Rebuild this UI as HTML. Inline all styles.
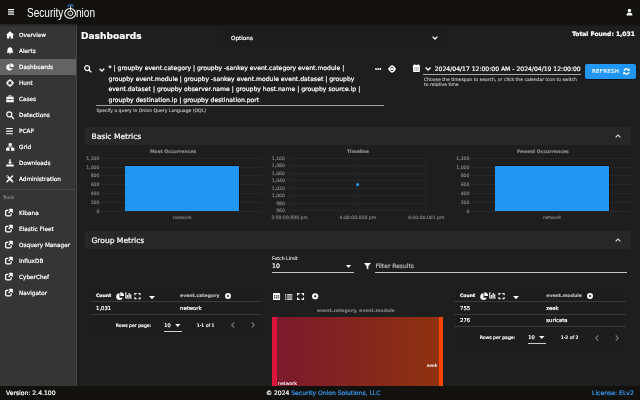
<!DOCTYPE html>
<html lang="en">
<head>
<meta charset="utf-8">
<title>Security Onion - Dashboards</title>
<style>
*{box-sizing:border-box;margin:0;padding:0}
html,body{width:640px;height:400px;overflow:hidden;background:#1e1e1e}
body{will-change:transform;font-family:"DejaVu Sans","Liberation Sans",sans-serif;color:#fff;position:relative;font-size:6px}
.a{position:absolute}
.t{position:absolute;white-space:nowrap;line-height:1;-webkit-text-stroke:0.2px}
.b{font-weight:bold}
svg{position:absolute;overflow:visible}
</style>
</head>
<body>
<div class="a" style="left:0px;top:0px;width:640px;height:24px;background:#12110d;"></div>
<div class="a" style="left:0px;top:24px;width:76.5px;height:362px;background:#353535;border-right:0.7px solid #424242;"></div>
<div class="a" style="left:0px;top:386px;width:640px;height:14px;background:#12110d;"></div>
<div class="a" style="left:0;top:24px;width:640px;height:3px;background:linear-gradient(rgba(0,0,0,.4),rgba(0,0,0,0))"></div>
<svg style="left:7.5px;top:9.3px;" width="6" height="6" viewBox="0 0 6 6"><path d="M0 .7h6M0 2.900h6M0 5.100h6" stroke="#fff" stroke-width="1.300" fill="none"/></svg>
<div class="t" style="top:8.00px;font-size:11.90px;left:27.20px;font-family:'Liberation Sans','DejaVu Sans',sans-serif;transform-origin:0 0;transform:scaleX(0.845);-webkit-text-stroke:0;">Security</div>
<svg style="left:56px;top:0px;" width="32" height="24" viewBox="0 0 32 24"><path d="M11.700 7.100a3 3 0 0 1 5.800 -.5" stroke="#1e78d2" stroke-width="1.200" fill="none"/><ellipse cx="14.100" cy="13.400" rx="5.400" ry="4.800" stroke="#fff" stroke-width="1.050" fill="none"/><path d="M14.800 5.800c-.4 1.500-.4 3.200 .1 4.900" stroke="#fff" stroke-width=".9" fill="none"/><ellipse cx="14.300" cy="13.300" rx="2.500" ry="2.250" stroke="#fff" stroke-width=".95" fill="none"/><circle cx="14.300" cy="13.300" r=".55" fill="#ddd"/></svg>
<div class="t" style="top:8.00px;font-size:11.90px;left:76.30px;font-family:'Liberation Sans','DejaVu Sans',sans-serif;transform-origin:0 0;transform:scaleX(0.845);-webkit-text-stroke:0;">nion</div>
<svg style="left:625.8px;top:8.1px;" width="6.9" height="8" viewBox="0 0 8 8"><circle cx="4" cy="2.2" r="2" fill="#fff"/><path d="M.6 8c0-2.4 1.2-3.4 3.4-3.4s3.4 1 3.4 3.4z" fill="#fff"/></svg>
<div class="a" style="left:0px;top:59px;width:76px;height:16px;background:#636363;"></div>
<div class="t" style="top:33.00px;font-size:5.74px;left:19.00px;">Overview</div>
<svg style="left:5.9px;top:31.3px;" width="8" height="8" viewBox="0 0 8 8"><path d="M4 .3L-.1 3.9h1.100v3.700h2.300V5.300h1.400v2.300h2.300V3.900h1.100z" fill="#fff"/></svg>
<div class="t" style="top:49.00px;font-size:5.74px;left:19.00px;">Alerts</div>
<svg style="left:5.9px;top:47.3px;" width="8" height="8" viewBox="0 0 8 8"><path d="M4 .3c-1.600 0-2.500 1.200-2.500 2.800c0 1.500-.5 2.200-1 2.700h7c-.5-.5-1-1.200-1-2.700c0-1.600-.9-2.800-2.500-2.800zM3.100 6.400a.9 .9 0 0 0 1.800 0z" fill="#fff"/></svg>
<div class="t" style="top:65.00px;font-size:5.74px;left:19.00px;">Dashboards</div>
<svg style="left:5.9px;top:63.3px;" width="8" height="8" viewBox="0 0 8 8"><path d="M3.600 .9a3.300 3.300 0 1 0 3.000 4.600h-3.000zM4.400 .2v3.700h3.500a3.500 3.500 0 0 0 -3.500-3.700z" fill="#fff"/></svg>
<div class="t" style="top:81.00px;font-size:5.74px;left:19.00px;">Hunt</div>
<svg style="left:5.9px;top:79.3px;" width="8" height="8" viewBox="0 0 8 8"><circle cx="4" cy="4" r="2.700" stroke="#fff" stroke-width="1.200" fill="none"/><path d="M4 0v3M4 5v3M0 4h3M5 4h3" stroke="#fff" stroke-width="1"/></svg>
<div class="t" style="top:97.00px;font-size:5.74px;left:19.00px;">Cases</div>
<svg style="left:5.9px;top:95.3px;" width="8" height="8" viewBox="0 0 8 8"><path d="M2.700 1.600v-.8h2.600v.8" stroke="#fff" stroke-width=".9" fill="none"/><path d="M.3 1.800h7.400v2.200h-7.400zM.3 4.600h3v.7h1.400v-.7h3v2.700h-7.400z" fill="#fff"/></svg>
<div class="t" style="top:113.00px;font-size:5.74px;left:19.00px;">Detections</div>
<svg style="left:5.9px;top:111.3px;" width="8" height="8" viewBox="0 0 8 8"><circle cx="3.300" cy="3.300" r="2.500" stroke="#fff" stroke-width="1.200" fill="none"/><path d="M5.200 5.200l2.300 2.300" stroke="#fff" stroke-width="1.300" stroke-linecap="round"/></svg>
<div class="t" style="top:129.00px;font-size:5.74px;left:19.00px;">PCAP</div>
<svg style="left:5.9px;top:127.3px;" width="8" height="8" viewBox="0 0 8 8"><path d="M.2 1.500h6.600M.2 4.100h6.600M.2 6.700h6.600" stroke="#fff" stroke-width="1.150"/></svg>
<div class="t" style="top:145.00px;font-size:5.74px;left:19.00px;">Grid</div>
<svg style="left:5.9px;top:143.3px;" width="8" height="8" viewBox="0 0 8 8"><path d="M2.600 .2h3.200v2.600h-3.200zM.1 5.100h3.400v2.600h-3.400zM5 5.100h3.400v2.600h-3.400z" fill="#fff"/><path d="M4.200 2.600v1.500M1.800 5.200v-1.200h4.900v1.200" stroke="#fff" stroke-width=".8" fill="none"/></svg>
<div class="t" style="top:161.00px;font-size:5.74px;left:19.00px;">Downloads</div>
<svg style="left:5.9px;top:159.3px;" width="8" height="8" viewBox="0 0 8 8"><path d="M3.300 .3h1.400v2.600h1.500l-2.200 2.300l-2.200-2.300h1.500zM.3 5.500h7.400v2h-7.400z" fill="#fff"/></svg>
<div class="t" style="top:177.00px;font-size:5.74px;left:19.00px;">Administration</div>
<svg style="left:5.9px;top:175.3px;" width="8" height="8" viewBox="0 0 8 8"><path d="M1.200 1.200l5.400 5.400" stroke="#fff" stroke-width="1.900" stroke-linecap="round"/><path d="M6.600 1l-5.600 5.800" stroke="#fff" stroke-width="1.500" stroke-linecap="round"/><circle cx="1.300" cy="1.300" r=".7" fill="#363636"/><circle cx="6.700" cy="6.500" r=".45" fill="#363636"/></svg>
<div class="a" style="left:0px;top:189px;width:75px;height:1px;background:#4a4a4a;"></div>
<div class="t" style="top:196.00px;font-size:4.47px;left:3.00px;color:#b0b0b0;-webkit-text-stroke:0;">Tools</div>
<div class="t" style="top:211.00px;font-size:5.74px;left:19.00px;">Kibana</div>
<svg style="left:5.2px;top:209px;" width="7.5" height="7.6" viewBox="0 0 8 8"><path d="M3.600 1.500h-1.800a1.100 1.100 0 0 0 -1.100 1.100v3.600a1.100 1.100 0 0 0 1.100 1.100h3.600a1.100 1.100 0 0 0 1.100-1.100v-1.700" stroke="#fff" stroke-width="1.350" fill="none"/><path d="M4.700 .3h3v3zM7.100 .9l-3.300 3.300" stroke="#fff" stroke-width="1.200" fill="#fff" stroke-linejoin="round"/></svg>
<div class="t" style="top:227.00px;font-size:5.74px;left:19.00px;">Elastic Fleet</div>
<svg style="left:5.2px;top:225px;" width="7.5" height="7.6" viewBox="0 0 8 8"><path d="M3.600 1.500h-1.800a1.100 1.100 0 0 0 -1.100 1.100v3.600a1.100 1.100 0 0 0 1.100 1.100h3.600a1.100 1.100 0 0 0 1.100-1.100v-1.700" stroke="#fff" stroke-width="1.350" fill="none"/><path d="M4.700 .3h3v3zM7.100 .9l-3.300 3.300" stroke="#fff" stroke-width="1.200" fill="#fff" stroke-linejoin="round"/></svg>
<div class="t" style="top:243.00px;font-size:5.74px;left:19.00px;">Osquery Manager</div>
<svg style="left:5.2px;top:241px;" width="7.5" height="7.6" viewBox="0 0 8 8"><path d="M3.600 1.500h-1.800a1.100 1.100 0 0 0 -1.100 1.100v3.600a1.100 1.100 0 0 0 1.100 1.100h3.600a1.100 1.100 0 0 0 1.100-1.100v-1.700" stroke="#fff" stroke-width="1.350" fill="none"/><path d="M4.700 .3h3v3zM7.100 .9l-3.300 3.300" stroke="#fff" stroke-width="1.200" fill="#fff" stroke-linejoin="round"/></svg>
<div class="t" style="top:259.00px;font-size:5.74px;left:19.00px;">InfluxDB</div>
<svg style="left:5.2px;top:257px;" width="7.5" height="7.6" viewBox="0 0 8 8"><path d="M3.600 1.500h-1.800a1.100 1.100 0 0 0 -1.100 1.100v3.600a1.100 1.100 0 0 0 1.100 1.100h3.600a1.100 1.100 0 0 0 1.100-1.100v-1.700" stroke="#fff" stroke-width="1.350" fill="none"/><path d="M4.700 .3h3v3zM7.100 .9l-3.300 3.300" stroke="#fff" stroke-width="1.200" fill="#fff" stroke-linejoin="round"/></svg>
<div class="t" style="top:275.00px;font-size:5.74px;left:19.00px;">CyberChef</div>
<svg style="left:5.2px;top:273px;" width="7.5" height="7.6" viewBox="0 0 8 8"><path d="M3.600 1.500h-1.800a1.100 1.100 0 0 0 -1.100 1.100v3.600a1.100 1.100 0 0 0 1.100 1.100h3.600a1.100 1.100 0 0 0 1.100-1.100v-1.700" stroke="#fff" stroke-width="1.350" fill="none"/><path d="M4.700 .3h3v3zM7.100 .9l-3.300 3.300" stroke="#fff" stroke-width="1.200" fill="#fff" stroke-linejoin="round"/></svg>
<div class="t" style="top:291.00px;font-size:5.74px;left:19.00px;">Navigator</div>
<svg style="left:5.2px;top:289px;" width="7.5" height="7.6" viewBox="0 0 8 8"><path d="M3.600 1.500h-1.800a1.100 1.100 0 0 0 -1.100 1.100v3.600a1.100 1.100 0 0 0 1.100 1.100h3.600a1.100 1.100 0 0 0 1.100-1.100v-1.700" stroke="#fff" stroke-width="1.350" fill="none"/><path d="M4.700 .3h3v3zM7.100 .9l-3.300 3.300" stroke="#fff" stroke-width="1.200" fill="#fff" stroke-linejoin="round"/></svg>
<div class="t" style="top:390.00px;font-size:6.09px;left:6.00px;">Version: 2.4.100</div>
<div class="t" style="top:390.00px;font-size:6.05px;left:266.00px;">© 2024 <span style="color:#379cf4">Security Onion Solutions, LLC</span></div>
<div class="t" style="top:390.00px;font-size:6.11px;left:592.00px;color:#379cf4;">License: ELv2</div>
<div class="t b" style="top:32.00px;font-size:9.05px;left:81.00px;">Dashboards</div>
<div class="a" style="left:222px;top:27.5px;width:225.5px;height:19.5px;background:#1c1c1c;border-radius:2px;"></div>
<div class="t" style="top:36.00px;font-size:5.68px;left:231.00px;">Options</div>
<svg style="left:431.75px;top:36.4px;" width="6" height="4" viewBox="0 0 6 4"><path d="M.6 .6l2.400 2.400l2.400-2.400" stroke="#fff" stroke-width="1.3" fill="none"/></svg>
<div class="t b" style="top:31.00px;font-size:6.02px;left:572.00px;">Total Found: 1,031</div>
<svg style="left:84.2px;top:64.9px;" width="7.4" height="7.3" viewBox="0 0 8 8"><circle cx="3.400" cy="3.400" r="2.700" stroke="#fff" stroke-width="1.300" fill="none"/><path d="M5.400 5.400l2.200 2.200" stroke="#fff" stroke-width="1.400" stroke-linecap="round"/></svg>
<svg style="left:98.5px;top:67.5px;" width="5.8" height="3.8" viewBox="0 0 6.200 3.800"><path d="M.6 .6l2.500 2.500l2.500-2.500" stroke="#fff" stroke-width="1.400" fill="none"/></svg>
<div class="t" style="top:65.00px;font-size:6.12px;left:108.50px;">* | groupby event.category | groupby -sankey event.category event.module |</div>
<div class="t" style="top:76.00px;font-size:6.12px;left:108.50px;">groupby event.module | groupby -sankey event.module event.dataset | groupby</div>
<div class="t" style="top:86.00px;font-size:6.12px;left:108.50px;">event.dataset | groupby observer.name | groupby host.name | groupby source.ip |</div>
<div class="t" style="top:97.00px;font-size:6.12px;left:108.50px;">groupby destination.ip | groupby destination.port</div>
<div class="a" style="left:96px;top:105px;width:287.5px;height:0.6px;background:#a0a0a0;"></div>
<div class="t" style="top:109.00px;font-size:4.55px;left:96.40px;color:#b0b0b0;">Specify a query in Onion Query Language (OQL)</div>
<svg style="left:374.7px;top:68.1px;" width="6.4" height="2" viewBox="0 0 6.400 2"><circle cx="1" cy="1" r=".95" fill="#fff"/><circle cx="3.200" cy="1" r=".95" fill="#fff"/><circle cx="5.400" cy="1" r=".95" fill="#fff"/></svg>
<svg style="left:388px;top:65.3px;" width="8" height="8" viewBox="0 0 8 8"><circle cx="4" cy="4" r="2.600" stroke="#fff" stroke-width="1.300" fill="none"/><path d="M0 4h8" stroke="#fff" stroke-width="1.300"/><path d="M4 0v1.500M4 6.500v1.500" stroke="#fff" stroke-width="1.100"/><circle cx="4" cy="4" r="1.100" fill="#fff"/></svg>
<svg style="left:413.1px;top:63.7px;" width="6.9" height="8" viewBox="0 0 7 8"><path d="M0 1.800a.8 .8 0 0 1 .8-.8h5.400a.8 .8 0 0 1 .8 .8v5.400a.8 .8 0 0 1 -.8 .8h-5.400a-.8 .8 0 0 1 -.8-.8z" fill="#fff"/><path d="M1.800 .1v1.700M5.200 .1v1.700" stroke="#fff" stroke-width="1.100"/><path d="M1.100 3.500h1.200v1.100h-1.200zM2.900 3.500h1.200v1.100h-1.200zM4.700 3.500h1.200v1.100h-1.200zM1.100 5.400h1.200v1.100h-1.200zM2.900 5.400h1.200v1.100h-1.200zM4.700 5.400h1.200v1.100h-1.200z" fill="#777"/></svg>
<svg style="left:425px;top:66.9px;" width="6.2" height="3.8" viewBox="0 0 6.200 3.800"><path d="M.6 .6l2.500 2.500l2.500-2.500" stroke="#fff" stroke-width="1.400" fill="none"/></svg>
<div class="t" style="top:66.00px;font-size:6.08px;left:434.75px;">2024/04/17 12:00:00 AM - 2024/04/19 12:00:00</div>
<div class="a" style="left:423px;top:74.15px;width:158px;height:1.1px;background:#a8a8a8;"></div>
<div class="t" style="top:78.00px;font-size:4.56px;left:424.00px;color:#b0b0b0;">Choose the timespan to search, or click the calendar icon to switch</div>
<div class="t" style="top:83.00px;font-size:4.52px;left:424.00px;color:#b0b0b0;">to relative time</div>
<div class="a" style="left:584.7px;top:64.4px;width:51.1px;height:14.4px;background:#2196f3;border-radius:2px;box-shadow:0 .8px 1.2px rgba(0,0,0,.45);"></div>
<div class="t" style="top:69.00px;font-size:5.55px;left:591.90px;letter-spacing:0.25px;-webkit-text-stroke:0.1px;">REFRESH</div>
<svg style="left:622.6px;top:67.9px;" width="7.1" height="7" viewBox="0 0 8 8"><path d="M1.200 3.400a3 3 0 0 1 5.200-1.300M6.800 4.600a3 3 0 0 1 -5.200 1.300" stroke="#fff" stroke-width="1.500" fill="none"/><path d="M7.700 .3v3h-3zM.3 7.700v-3h3z" fill="#fff"/></svg>
<div class="a" style="left:85px;top:127px;width:546px;height:18.3px;background:#272727;"></div>
<div class="t" style="top:133.00px;font-size:7.56px;left:91.50px;">Basic Metrics</div>
<svg style="left:614.5px;top:134px;" width="6" height="4" viewBox="0 0 6 4"><path d="M.6 3.400l2.400-2.400l2.400 2.400" stroke="#ddd" stroke-width="1.100" fill="none"/></svg>
<div class="a" style="left:85px;top:231px;width:546px;height:18.3px;background:#272727;"></div>
<div class="t" style="top:237.00px;font-size:7.56px;left:91.50px;">Group Metrics</div>
<svg style="left:614.5px;top:238px;" width="6" height="4" viewBox="0 0 6 4"><path d="M.6 3.400l2.400-2.400l2.400 2.400" stroke="#ddd" stroke-width="1.100" fill="none"/></svg>
<div class="t b" style="top:150.00px;font-size:4.58px;left:150.00px;color:#8c8c8c;">Most Occurrences</div>
<div class="t" style="top:157.00px;font-size:4.65px;right:540.50px;color:#7d7d7d;">1,200</div>
<div class="a" style="left:101.0px;top:157.75px;width:159.5px;height:0.5px;background:#282828;"></div>
<div class="t" style="top:166.00px;font-size:4.65px;right:540.50px;color:#7d7d7d;">1,000</div>
<div class="a" style="left:101.0px;top:166.75px;width:159.5px;height:0.5px;background:#282828;"></div>
<div class="t" style="top:174.00px;font-size:4.65px;right:540.50px;color:#7d7d7d;">800</div>
<div class="a" style="left:101.0px;top:175.25px;width:159.5px;height:0.5px;background:#282828;"></div>
<div class="t" style="top:183.00px;font-size:4.65px;right:540.50px;color:#7d7d7d;">600</div>
<div class="a" style="left:101.0px;top:184.25px;width:159.5px;height:0.5px;background:#282828;"></div>
<div class="t" style="top:192.00px;font-size:4.65px;right:540.50px;color:#7d7d7d;">400</div>
<div class="a" style="left:101.0px;top:193.25px;width:159.5px;height:0.5px;background:#282828;"></div>
<div class="t" style="top:201.00px;font-size:4.65px;right:540.50px;color:#7d7d7d;">200</div>
<div class="a" style="left:101.0px;top:201.75px;width:159.5px;height:0.5px;background:#282828;"></div>
<div class="t" style="top:210.00px;font-size:4.65px;right:540.50px;color:#7d7d7d;">0</div>
<div class="a" style="left:101.0px;top:210.75px;width:159.5px;height:0.5px;background:#282828;"></div>
<div class="a" style="left:124.6px;top:165.3px;width:115px;height:45.9px;background:#1a0e0e;"></div>
<div class="a" style="left:125.1px;top:165.8px;width:114px;height:44.9px;background:#2196f3;"></div>
<div class="t" style="top:216.00px;font-size:4.62px;left:173.00px;color:#7d7d7d;">network</div>
<div class="t b" style="top:150.00px;font-size:4.57px;left:517.00px;color:#8c8c8c;">Fewest Occurrences</div>
<div class="t" style="top:157.00px;font-size:4.65px;right:170.50px;color:#7d7d7d;">1,200</div>
<div class="a" style="left:471.0px;top:157.75px;width:160px;height:0.5px;background:#282828;"></div>
<div class="t" style="top:166.00px;font-size:4.65px;right:170.50px;color:#7d7d7d;">1,000</div>
<div class="a" style="left:471.0px;top:166.75px;width:160px;height:0.5px;background:#282828;"></div>
<div class="t" style="top:174.00px;font-size:4.65px;right:170.50px;color:#7d7d7d;">800</div>
<div class="a" style="left:471.0px;top:175.25px;width:160px;height:0.5px;background:#282828;"></div>
<div class="t" style="top:183.00px;font-size:4.65px;right:170.50px;color:#7d7d7d;">600</div>
<div class="a" style="left:471.0px;top:184.25px;width:160px;height:0.5px;background:#282828;"></div>
<div class="t" style="top:192.00px;font-size:4.65px;right:170.50px;color:#7d7d7d;">400</div>
<div class="a" style="left:471.0px;top:193.25px;width:160px;height:0.5px;background:#282828;"></div>
<div class="t" style="top:201.00px;font-size:4.65px;right:170.50px;color:#7d7d7d;">200</div>
<div class="a" style="left:471.0px;top:201.75px;width:160px;height:0.5px;background:#282828;"></div>
<div class="t" style="top:210.00px;font-size:4.65px;right:170.50px;color:#7d7d7d;">0</div>
<div class="a" style="left:471.0px;top:210.75px;width:160px;height:0.5px;background:#282828;"></div>
<div class="a" style="left:494.7px;top:165.3px;width:115px;height:45.9px;background:#1a0e0e;"></div>
<div class="a" style="left:495.2px;top:165.8px;width:114px;height:44.9px;background:#2196f3;"></div>
<div class="t" style="top:216.00px;font-size:4.49px;left:543.00px;color:#7d7d7d;">network</div>
<div class="t b" style="top:150.00px;font-size:4.56px;left:347.00px;color:#8c8c8c;">Timeline</div>
<div class="t" style="top:157.00px;font-size:4.65px;right:355.00px;color:#7d7d7d;">1,100</div>
<div class="a" style="left:286.5px;top:157.75px;width:140px;height:0.5px;background:#272727;"></div>
<div class="t" style="top:164.00px;font-size:4.65px;right:355.00px;color:#7d7d7d;">1,080</div>
<div class="a" style="left:286.5px;top:165.25px;width:140px;height:0.5px;background:#272727;"></div>
<div class="t" style="top:172.00px;font-size:4.65px;right:355.00px;color:#7d7d7d;">1,060</div>
<div class="a" style="left:286.5px;top:172.75px;width:140px;height:0.5px;background:#272727;"></div>
<div class="t" style="top:179.00px;font-size:4.65px;right:355.00px;color:#7d7d7d;">1,040</div>
<div class="a" style="left:286.5px;top:180.25px;width:140px;height:0.5px;background:#272727;"></div>
<div class="t" style="top:187.00px;font-size:4.65px;right:355.00px;color:#7d7d7d;">1,020</div>
<div class="a" style="left:286.5px;top:187.75px;width:140px;height:0.5px;background:#272727;"></div>
<div class="t" style="top:194.00px;font-size:4.65px;right:355.00px;color:#7d7d7d;">1,000</div>
<div class="a" style="left:286.5px;top:195.25px;width:140px;height:0.5px;background:#272727;"></div>
<div class="t" style="top:202.00px;font-size:4.65px;right:355.00px;color:#7d7d7d;">980</div>
<div class="a" style="left:286.5px;top:202.75px;width:140px;height:0.5px;background:#272727;"></div>
<div class="t" style="top:209.00px;font-size:4.65px;right:355.00px;color:#7d7d7d;">960</div>
<div class="a" style="left:286.5px;top:210.25px;width:140px;height:0.5px;background:#272727;"></div>
<div class="a" style="left:289.375px;top:158px;width:0.5px;height:55px;background:#232323;"></div>
<div class="t" style="top:216.00px;font-size:4.59px;left:271.25px;color:#7d7d7d;">3:59:59.999 pm</div>
<div class="a" style="left:357.625px;top:158px;width:0.5px;height:55px;background:#232323;"></div>
<div class="t" style="top:216.00px;font-size:4.59px;left:339.50px;color:#7d7d7d;">4:00:00.000 pm</div>
<div class="a" style="left:426.0px;top:158px;width:0.5px;height:55px;background:#232323;"></div>
<div class="t" style="top:216.00px;font-size:4.56px;left:408.00px;color:#7d7d7d;">4:00:00.001 pm</div>
<svg style="left:356.1px;top:183px;" width="3.2" height="3.2" viewBox="0 0 3.2 3.2"><circle cx="1.6" cy="1.6" r="1.550" fill="#2196f3"/></svg>
<div class="t" style="top:257.00px;font-size:4.67px;left:272.00px;color:#d0d0d0;">Fetch Limit</div>
<div class="t" style="top:263.00px;font-size:6.22px;left:272.00px;">10</div>
<svg style="left:346px;top:265px;" width="5" height="3" viewBox="0 0 5 3"><path d="M0 0h5l-2.500 3z" fill="#fff"/></svg>
<div class="a" style="left:271.5px;top:271.7px;width:82px;height:0.6px;background:#c4c4c4;"></div>
<svg style="left:363.5px;top:262.5px;" width="7" height="6.5" viewBox="0 0 7 6.500"><path d="M0 0h7l-2.700 3.200v3.300l-1.600-1.100v-2.200z" fill="#fff"/></svg>
<div class="t" style="top:263.00px;font-size:6.00px;left:375.50px;color:#b8b8b8;">Filter Results</div>
<div class="a" style="left:375px;top:271.7px;width:251.5px;height:0.6px;background:#c4c4c4;"></div>
<div class="a" style="left:90px;top:289px;width:172px;height:47px;background:#1d1d1d;border-radius:2px;"></div>
<div class="t b" style="top:294.00px;font-size:4.57px;left:96.00px;">Count</div>
<svg style="left:115.6px;top:291.6px;" width="7.8" height="8" viewBox="0 0 6 6"><path d="M2.700 .8a2.600 2.600 0 1 0 2.500 3.500h-2.500zM3.300 .1v2.900h2.900a2.900 2.900 0 0 0 -2.900-2.900z" fill="#fff"/></svg>
<svg style="left:124.8px;top:292.4px;" width="7.2" height="6.6" viewBox="0 0 6 6"><path d="M.5 .3v5.200h5.400" stroke="#fff" stroke-width="1" fill="none"/><path d="M1.600 2.800h1v2h-1zM3 1h1v3.800h-1zM4.400 2h1v2.800h-1z" fill="#fff"/></svg>
<svg style="left:134.3px;top:292.7px;" width="7" height="6.2" viewBox="0 0 6 6"><path d="M.5 2.200v-1.700h1.700M3.800 .5h1.700v1.700M5.500 3.800v1.700h-1.700M2.200 5.500h-1.700v-1.700" stroke="#fff" stroke-width="1.050" fill="none"/></svg>
<svg style="left:148.5px;top:295.6px;" width="6" height="3.5" viewBox="0 0 5 3"><path d="M0 0h5l-2.500 2.800z" fill="#fff"/></svg>
<div class="t b" style="top:294.00px;font-size:4.62px;left:180.00px;color:#b4b4b4;">event.category</div>
<svg style="left:224.8px;top:292.5px;" width="6" height="6" viewBox="0 0 6 6"><circle cx="3" cy="3" r="2.950" fill="#fff"/><path d="M3 1.700v2.600M1.700 3h2.600" stroke="#1c1c1c" stroke-width=".9"/></svg>
<div class="a" style="left:90px;top:301px;width:172px;height:0.6px;background:#3a3a3a;"></div>
<div class="t" style="top:306.00px;font-size:5.33px;left:96.00px;">1,031</div>
<div class="t" style="top:306.00px;font-size:5.33px;left:180.00px;">network</div>
<div class="a" style="left:90px;top:313.5px;width:172px;height:0.6px;background:#3a3a3a;"></div>
<div class="t" style="top:324.00px;font-size:4.59px;left:115.75px;">Rows per page:</div>
<div class="t" style="top:323.00px;font-size:5.00px;left:164.25px;">10</div>
<svg style="left:175px;top:323.7px;" width="5.5" height="3.2" viewBox="0 0 5 3"><path d="M0 0h5l-2.500 2.800z" fill="#fff"/></svg>
<div class="a" style="left:164.2px;top:330.5px;width:18.3px;height:0.7px;background:#d0d0d0;"></div>
<div class="t" style="top:324.00px;font-size:4.59px;left:196.75px;">1-1 of 1</div>
<svg style="left:231px;top:322.2px;" width="4" height="6" viewBox="0 0 4 6"><path d="M3.300 .4l-2.600 2.600l2.600 2.600" stroke="#777" stroke-width="1.100" fill="none"/></svg>
<svg style="left:250.5px;top:322.2px;" width="4" height="6" viewBox="0 0 4 6"><path d="M.7 .4l2.600 2.600l-2.600 2.600" stroke="#777" stroke-width="1.100" fill="none"/></svg>
<div class="a" style="left:454px;top:289px;width:172px;height:59.5px;background:#1d1d1d;border-radius:2px;"></div>
<div class="t b" style="top:294.00px;font-size:4.57px;left:460.00px;">Count</div>
<svg style="left:479.6px;top:291.6px;" width="7.8" height="8" viewBox="0 0 6 6"><path d="M2.700 .8a2.600 2.600 0 1 0 2.500 3.500h-2.500zM3.300 .1v2.900h2.900a2.900 2.900 0 0 0 -2.900-2.900z" fill="#fff"/></svg>
<svg style="left:488.8px;top:292.4px;" width="7.2" height="6.6" viewBox="0 0 6 6"><path d="M.5 .3v5.200h5.400" stroke="#fff" stroke-width="1" fill="none"/><path d="M1.600 2.800h1v2h-1zM3 1h1v3.800h-1zM4.400 2h1v2.800h-1z" fill="#fff"/></svg>
<svg style="left:498.3px;top:292.7px;" width="7" height="6.2" viewBox="0 0 6 6"><path d="M.5 2.200v-1.700h1.700M3.800 .5h1.700v1.700M5.500 3.800v1.700h-1.700M2.200 5.500h-1.700v-1.700" stroke="#fff" stroke-width="1.050" fill="none"/></svg>
<svg style="left:512.5px;top:295.6px;" width="6" height="3.5" viewBox="0 0 5 3"><path d="M0 0h5l-2.500 2.800z" fill="#fff"/></svg>
<div class="t b" style="top:294.00px;font-size:4.61px;left:546.25px;color:#b4b4b4;">event.module</div>
<svg style="left:587.3px;top:292.5px;" width="6" height="6" viewBox="0 0 6 6"><circle cx="3" cy="3" r="2.950" fill="#fff"/><path d="M3 1.700v2.600M1.700 3h2.600" stroke="#1c1c1c" stroke-width=".9"/></svg>
<div class="a" style="left:454px;top:301px;width:172px;height:0.6px;background:#3a3a3a;"></div>
<div class="t" style="top:306.00px;font-size:5.33px;left:460.00px;">755</div>
<div class="t" style="top:306.00px;font-size:5.33px;left:546.25px;">zeek</div>
<div class="a" style="left:454px;top:313.5px;width:172px;height:0.6px;background:#3a3a3a;"></div>
<div class="t" style="top:318.00px;font-size:5.33px;left:460.00px;">276</div>
<div class="t" style="top:318.00px;font-size:5.33px;left:546.25px;">suricata</div>
<div class="a" style="left:454px;top:326.0px;width:172px;height:0.6px;background:#3a3a3a;"></div>
<div class="t" style="top:336.00px;font-size:4.59px;left:479.75px;">Rows per page:</div>
<div class="t" style="top:335.00px;font-size:5.00px;left:528.25px;">10</div>
<svg style="left:539px;top:336.2px;" width="5.5" height="3.2" viewBox="0 0 5 3"><path d="M0 0h5l-2.500 2.800z" fill="#fff"/></svg>
<div class="a" style="left:528.2px;top:343.0px;width:18.3px;height:0.7px;background:#d0d0d0;"></div>
<div class="t" style="top:336.00px;font-size:4.59px;left:560.75px;">1-2 of 2</div>
<svg style="left:595px;top:334.7px;" width="4" height="6" viewBox="0 0 4 6"><path d="M3.300 .4l-2.600 2.600l2.600 2.600" stroke="#777" stroke-width="1.100" fill="none"/></svg>
<svg style="left:614.5px;top:334.7px;" width="4" height="6" viewBox="0 0 4 6"><path d="M.7 .4l2.600 2.600l-2.600 2.600" stroke="#777" stroke-width="1.100" fill="none"/></svg>
<svg style="left:272.9px;top:292.8px;" width="7.1" height="7.1" viewBox="0 0 7 7"><rect x="0" y="0" width="7" height="7" rx=".9" fill="#fff"/><path d="M.9 2.300h1.300v1.100h-1.300zM2.850 2.300h1.300v1.100h-1.300zM4.800 2.300h1.300v1.100h-1.300zM.9 4.300h1.300v1.100h-1.300zM2.850 4.300h1.300v1.100h-1.300zM4.800 4.300h1.300v1.100h-1.300z" fill="#2a2a2a"/><path d="M.9 1.150h5.200" stroke="#ddd" stroke-width=".1"/></svg>
<svg style="left:284.9px;top:293.7px;" width="7.3" height="6" viewBox="0 0 7.300 6"><path d="M0 .8h1.300M0 3h1.300M0 5.200h1.300M2.100 .8h5.200M2.100 3h5.200M2.100 5.200h5.200" stroke="#fff" stroke-width="1.200"/></svg>
<svg style="left:296.7px;top:292.9px;" width="7.1" height="7" viewBox="0 0 6 6"><path d="M.5 2.200v-1.700h1.700M3.800 .5h1.700v1.700M5.500 3.800v1.700h-1.700M2.200 5.500h-1.700v-1.700" stroke="#fff" stroke-width="1.050" fill="none"/></svg>
<svg style="left:311.9px;top:293.1px;" width="6.3" height="6.5" viewBox="0 0 6 6"><circle cx="3" cy="3" r="2.950" fill="#fff"/><path d="M3 1.700v2.600M1.700 3h2.600" stroke="#222" stroke-width=".9"/></svg>
<div class="t b" style="top:309.00px;font-size:4.58px;left:317.00px;color:#7c7c7c;">event.category, event.module</div>
<div class="a" style="left:277px;top:317px;width:162px;height:69px;background:linear-gradient(90deg,#7d192d,#8e320f)"></div>
<div class="a" style="left:272.3px;top:317px;width:4.4px;height:69px;background:#dc143c;"></div>
<div class="a" style="left:439.1px;top:317px;width:4.3px;height:69px;background:#ff4500;"></div>
<div class="t" style="top:382.00px;font-size:4.63px;left:278.10px;-webkit-text-stroke:0.1px;">network</div>
<div class="t" style="top:364.00px;font-size:4.54px;left:426.80px;-webkit-text-stroke:0.1px;">zeek</div>
</body>
</html>
